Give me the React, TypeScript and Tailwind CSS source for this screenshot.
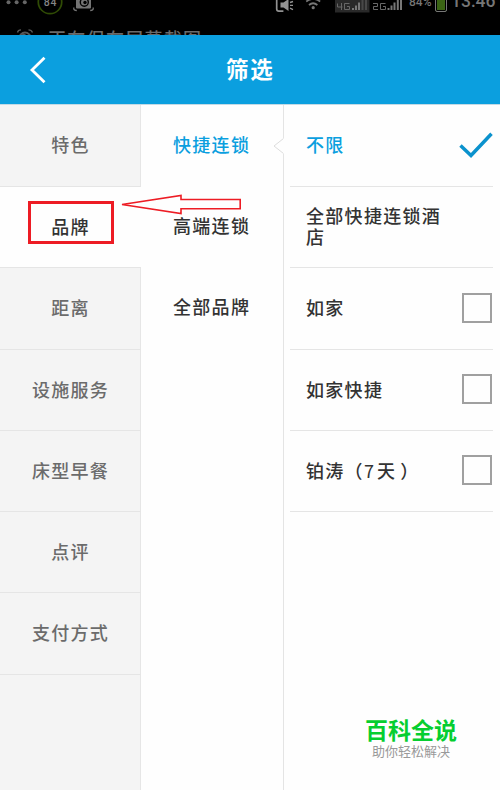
import React from "react";

const categories = [
  { name: "特色", height: "h-[82px]" },
  { name: "品牌", height: "h-[81px]", active: true },
  { name: "距离", height: "h-[82px]" },
  { name: "设施服务", height: "h-[81px]" },
  { name: "床型早餐", height: "h-[81px]" },
  { name: "点评", height: "h-[81px]" },
  { name: "支付方式", height: "h-[82px]" },
];

const groups = [
  { name: "快捷连锁", active: true },
  { name: "高端连锁" },
  { name: "全部品牌" },
];

const options = [
  { name: "不限", height: "h-[82px]", checked: true },
  { name: "全部快捷连锁酒店", height: "h-[81px]", noBox: true },
  { name: "如家", height: "h-[82px]" },
  { name: "如家快捷", height: "h-[81px]" },
  {
    name: "铂涛（7天）",
    height: "h-[81px]",
    label: (
      <>
        铂涛（
        <span className="inline-block w-[13px] font-normal">7</span>
        天<span className="ml-[4px]">）</span>
      </>
    ),
  },
];

const StatusBar = () => {
  return (
    <div className="h-[35px] bg-black text-[#767676] overflow-hidden flex flex-col">
      <div className="h-[28px] flex items-start shrink-0">
        <svg width="100" height="16" viewBox="0 0 100 16" className="shrink-0">
          <g fill="#666">
            <circle cx="8.5" cy="2.2" r="2" />
            <circle cx="16.6" cy="2.2" r="2" />
            <circle cx="24.8" cy="2.2" r="2" />
          </g>
          <circle cx="50" cy="2" r="11.7" fill="none" stroke="#304c05" strokeWidth="1.7" />
          <text x="50.6" y="6.3" fontSize="10.5" fontWeight="500" letterSpacing="1" textAnchor="middle" fill="#858585" fontFamily="Roboto, sans-serif">
            84
          </text>
          <path d="M76 0h15v7.5a1 1 0 0 1-1 1H77a1 1 0 0 1-1-1z" fill="#747474" />
          <circle cx="84.3" cy="2.3" r="4" fill="#747474" stroke="#000" strokeWidth="1.4" />
          <circle cx="85" cy="2.5" r="1.7" fill="#000" />
          <path d="M73.8 7.5v1.3q0 1.7 3 1.7M93.2 7.5v1.3q0 1.7-3 1.7" fill="none" stroke="#747474" strokeWidth="1.3" />
        </svg>
        <svg width="130" height="16" viewBox="274 0 130 16" className="ml-[174px] shrink-0">
          {/* muted speaker */}
          <path d="M276.7 0v9q0 2.2 2.2 2.2h4.5" fill="none" stroke="#929292" strokeWidth="1.7" />
          <path d="M280.5 2.5h3L288.5-1v12l-5-3.5h-3z" fill="#929292" />
          <path d="M290 2.5l3-1M290 5.4h3M290 8.2l3 1.4" stroke="#929292" strokeWidth="1.4" />
          {/* wifi */}
          <path d="M306.2 1.5q7-5 14 0M309 5q4-3.5 8.4 0" fill="none" stroke="#777" strokeWidth="1.7" />
          <circle cx="313.2" cy="7.7" r="1.6" fill="#777" />
          {/* signals */}
          <path d="M335 0h34.5v12.5H335z" fill="#292929" />
          <g fill="none" stroke="#686868" strokeWidth="1">
            <path d="M337.5 3.5v3.5h5M341.5 3v7M349.5 3.5h-5v6h5V6.5h-2.5" />
            <path d="M373 3.5h4.5v3h-4v3h4.5M385.5 3.5h-5v6h5V6.5h-2.5" />
          </g>
          <g fill="#777">
            <path d="M352 8h2v2h-2zM355 5.5h2V10h-2zM358 2.5h2V10h-2z" />
            <path d="M387.5 8h2v2h-2zM390.5 5.5h2V10h-2zM393.5 2.5h2V10h-2zM396.8 0h2v10h-2zM400 0h2v10h-2z" />
          </g>
          <path d="M361.5 0h2v10h-2zM365 0h2v10h-2z" fill="#484848" />
        </svg>
        <span className="ml-[5px] -mt-[5px] w-[25px] shrink-0 text-[12px] leading-[14px] font-medium font-[Roboto,sans-serif]">
          84%
        </span>
        <div className="ml-px -mt-[2px] w-[12px] h-[14px] shrink-0 rounded-[2px] border border-[#777] bg-[#3b6514] ring-1 ring-inset ring-black" />
        <span className="ml-[4px] -mt-[9px] shrink-0 text-[17.5px] leading-[20px] font-medium font-[Roboto,sans-serif]">
          13:46
        </span>
      </div>
      <div className="flex items-start text-[#6a6a6a]">
        <svg width="18" height="18" viewBox="0 0 18 18" className="ml-[16px] mt-px shrink-0">
          <path d="M1.5 3.5Q2 1 5 .9M12.5.9Q15.5 1 16.5 3.5" fill="none" stroke="#575757" strokeWidth="1.3" />
          <circle cx="9" cy="9" r="5.5" fill="none" stroke="#575757" strokeWidth="2" />
          <path d="M6 4.5l5 3" stroke="#575757" strokeWidth="2" />
        </svg>
        <span className="ml-[14px] text-[18px] leading-[20px] tracking-[1.3px] font-medium whitespace-nowrap">
          正在保存屏幕截图
        </span>
      </div>
    </div>
  );
};

const App = () => {
  return (
    <div className="relative w-[500px] h-[790px] overflow-hidden bg-[#fefefe] flex flex-col font-['Noto_Sans_CJK_SC',sans-serif]">
      <StatusBar />

      {/* Header */}
      <div className="h-[69px] shrink-0 bg-[#0b9fdf] flex items-center text-white">
        <svg width="18" height="28" viewBox="0 0 18 28" className="ml-[29px]">
          <path d="M15.5 1.8L3 14l12.5 12.2" fill="none" stroke="#fff" strokeWidth="2.8" />
        </svg>
        <h1 className="ml-[179px] pb-[4px] text-[22.5px] leading-[30px] tracking-[1.8px] font-bold">
          筛选
        </h1>
      </div>

      <div className="flex-1 flex border-t border-[#c3dae5]">
        {/* Categories */}
        <div className="w-[141px] shrink-0 bg-[#f4f4f4] shadow-[inset_-1px_0_0_#e6e6e6]">
          {categories.map((item) => (
            <div
              key={item.name}
              className={`${item.height} flex items-center justify-center border-b border-[#e5e5e5] pb-[2px] text-[18px] tracking-[1.3px] font-medium ${
                item.active ? "bg-[#fefefe] text-[#333]" : "text-[#6b6b6b]"
              }`}
            >
              {item.name}
            </div>
          ))}
        </div>

        {/* Brand groups */}
        <div className="w-[142px] shrink-0">
          {groups.map((item) => (
            <div
              key={item.name}
              className={`h-[81px] flex items-center pl-[32px] pb-[3px] text-[18px] tracking-[1.3px] font-medium ${
                item.active ? "text-[#0b9fdf]" : "text-[#333]"
              }`}
            >
              {item.name}
            </div>
          ))}
        </div>

        {/* Brand options */}
        <div className="flex-1 border-l border-[#e4e4e4] pl-[6px] pr-[7px]">
          {options.map((item) => (
            <div
              key={item.name}
              className={`${item.height} flex items-center justify-between border-b border-[#e5e5e5] pl-[16px] pb-[2px] text-[18px] leading-[21px] tracking-[1.3px] font-medium ${
                item.checked ? "text-[#0b9fdf]" : "text-[#333]"
              }`}
            >
              <span className="w-[140px]">{item.label ?? item.name}</span>
              {item.checked && (
                <svg width="34" height="27" viewBox="0 0 34 27" className="mt-px">
                  <path d="M1.5 13.5L12 23.5L32.5 1.8" fill="none" stroke="#0b92cd" strokeWidth="3.5" />
                </svg>
              )}
              {!item.checked && !item.noBox && (
                <span className="mr-px w-[30px] h-[30px] shrink-0 border-2 border-[#a0a0a0]" />
              )}
            </div>
          ))}
        </div>
      </div>

      {/* Notch pointing at the selected group */}
      <svg width="11" height="16" viewBox="0 0 11 16" className="absolute left-[273px] top-[138px]">
        <path d="M10 0h1v16h-1L.5 8z" fill="#fefefe" />
        <path d="M10.5.5L1 8l9.5 7.5" fill="none" stroke="#dcdcdc" strokeWidth="1" />
      </svg>

      {/* Annotations */}
      <div className="absolute left-[28px] top-[201px] w-[86px] h-[43px] border-[3px] border-[#ed1c24]" />
      <svg width="122" height="22" viewBox="0 0 122 22" className="absolute left-[120px] top-[194px]">
        <path d="M2 10.5L61 1.5V5.5H120.2V14.8H61V19.5Z" fill="none" stroke="#ed1c24" strokeWidth="1.6" />
      </svg>

      {/* Watermark */}
      <div className="absolute left-[365px] top-[716px] w-[92px] text-center whitespace-nowrap">
        <div className="text-[23px] leading-[27px] font-bold text-[#06ce30]">百科全说</div>
        <div className="text-[13px] leading-[15px] text-[#999]">助你轻松解决</div>
      </div>
    </div>
  );
};

export default App;
